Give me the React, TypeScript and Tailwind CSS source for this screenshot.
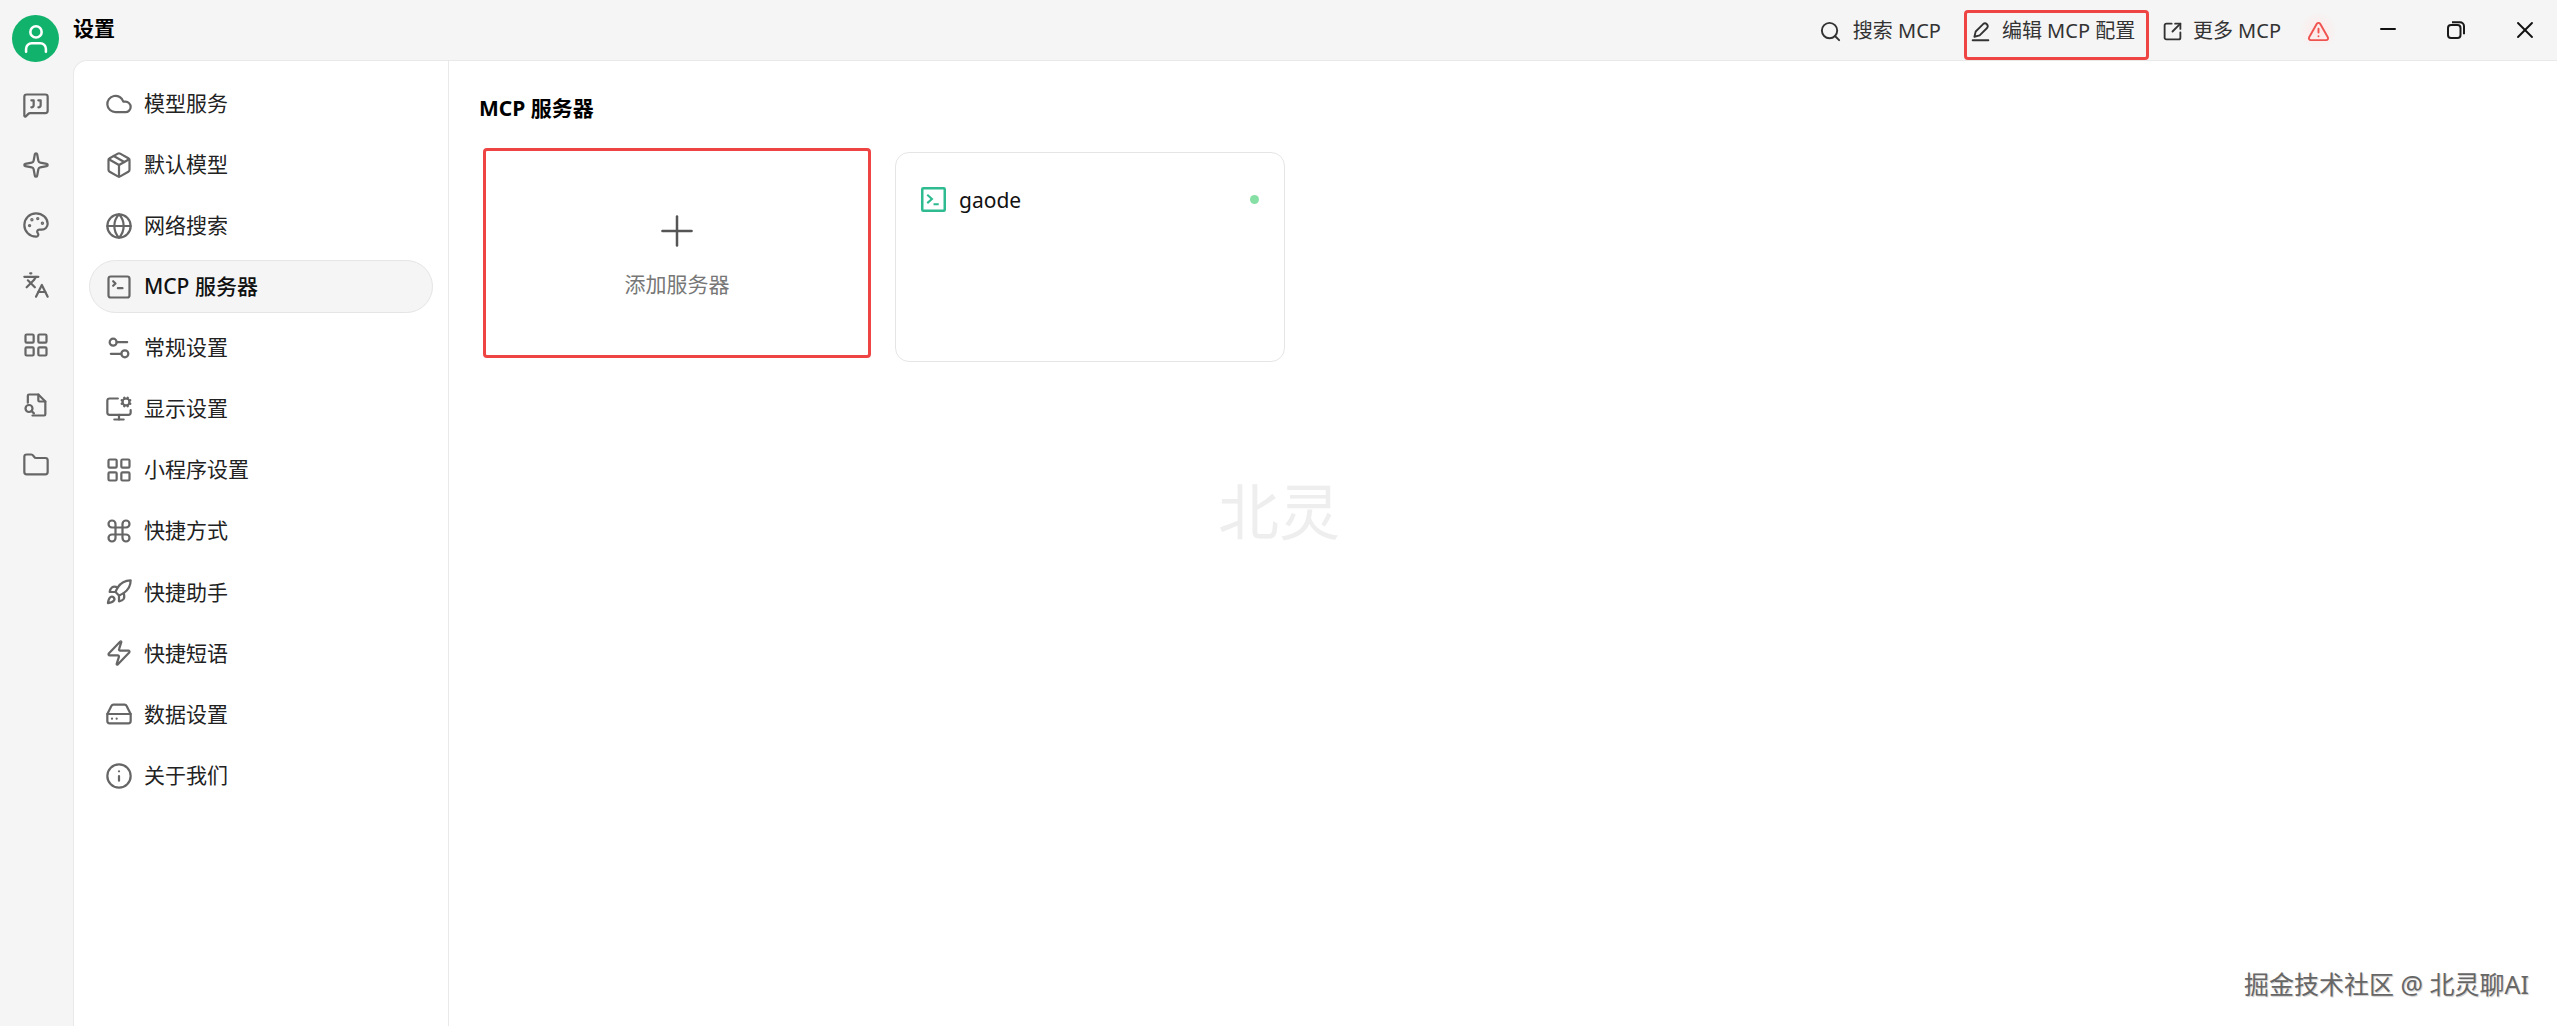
import {
  Cloud, Package, Globe, SquareTerminal, Settings2, MonitorCog, LayoutGrid, Command, Rocket, Zap, HardDrive, Info,
  MessageSquareQuote, Sparkle, Palette, Languages, Folder, Search, SquareArrowOutUpRight,
  TriangleAlert, Minus, X, Plus, User,
} from "lucide-react";

function FileFind({ size, strokeWidth, className }: { size?: number; strokeWidth?: number; className?: string }) {
  return (
    <svg width={size} height={size} viewBox="0 0 24 24" fill="none" stroke="currentColor" strokeWidth={strokeWidth} strokeLinecap="round" strokeLinejoin="round" className={className}>
      <path d="M5 10V4a1 1 0 0 1 1-1h8l6 6v11a1 1 0 0 1-1 1H9" />
      <path d="M14 3v5a1 1 0 0 0 1 1h5" />
      <circle cx="6" cy="15" r="3" />
      <path d="m8.2 17.2 2 2" />
    </svg>
  );
}

function RestoreIcon() {
  return (
    <svg width="18" height="18" viewBox="0 0 18 18" fill="none" stroke="#1a1a1a" strokeWidth="2" className="-mt-[3px]">
      <rect x="1" y="4" width="12.5" height="13" rx="3" />
      <path d="M5 1.2h8a4 4 0 0 1 4 4v8" />
    </svg>
  );
}

function EditIcon() {
  return (
    <svg width="21" height="21" viewBox="0 0 24 24" fill="none" stroke="currentColor" strokeWidth="2.1" strokeLinecap="round" strokeLinejoin="round">
      <path d="M3 22h18" />
      <path d="M15 3.5 6.5 12 5 18l6-1.5L19.5 8a3.2 3.2 0 0 0-4.5-4.5z" />
    </svg>
  );
}

const railIcons = [MessageSquareQuote, Sparkle, Palette, Languages, LayoutGrid, FileFind, Folder];

const menu = [
  { label: "模型服务", icon: Cloud },
  { label: "默认模型", icon: Package },
  { label: "网络搜索", icon: Globe },
  { label: "MCP 服务器", icon: SquareTerminal, active: true },
  { label: "常规设置", icon: Settings2 },
  { label: "显示设置", icon: MonitorCog },
  { label: "小程序设置", icon: LayoutGrid },
  { label: "快捷方式", icon: Command },
  { label: "快捷助手", icon: Rocket },
  { label: "快捷短语", icon: Zap },
  { label: "数据设置", icon: HardDrive },
  { label: "关于我们", icon: Info },
];

export default function App() {
  return (
    <div className="flex h-screen overflow-hidden bg-[#f5f5f5] text-[#222] font-['Noto_Sans','Noto_Sans_CJK_SC',sans-serif]">
      {/* left rail */}
      <div className="flex w-[73px] shrink-0 flex-col items-center pr-[2px] pt-[15px]">
        <div className="flex h-[47px] w-[47px] items-center justify-center rounded-full bg-[#10b26c]">
          <User size={34} strokeWidth={1.8} className="text-white" />
        </div>
        <div className="mt-[29px] flex flex-col gap-8">
          {railIcons.map((Icon, i) => (
            <Icon key={i} size={28} strokeWidth={1.9} className="text-[#666]" />
          ))}
        </div>
      </div>

      <div className="relative flex min-w-0 flex-1 flex-col">
        {/* top bar */}
        <div className="flex h-[60px] shrink-0 items-center justify-between">
          <span className="-mt-[2px] text-[21px] font-bold text-black">设置</span>
          <div className="flex h-full items-center pr-[18px] pt-[2px]">
            <div className="flex items-center gap-[11px] text-[20px] text-[#333]">
              <Search size={23} strokeWidth={2} />
              <span>搜索 MCP</span>
            </div>
            <div className="ml-[23px] flex h-[50px] w-[185px] items-center gap-[11px] self-end rounded-[4px] border-[3px] border-[#ef4444] pb-[8px] pl-[3px] text-[20px] text-[#333]">
              <EditIcon />
              <span>编辑 MCP 配置</span>
            </div>
            <div className="ml-[13px] flex items-center gap-[10px] text-[20px] text-[#333]">
              <SquareArrowOutUpRight size={21} strokeWidth={2.1} />
              <span>更多 MCP</span>
            </div>
            <div className="ml-[17px] flex h-[40px] w-[40px] items-center justify-center rounded-full bg-[radial-gradient(circle,#ffe8e8_0%,#f5f5f5_70%)] text-[#ef5350]">
              <TriangleAlert size={23} strokeWidth={2} />
            </div>
            <Minus size={24} strokeWidth={2} className="-mt-[4px] ml-[38px] text-[#111]" />
            <div className="ml-[47px] flex">
              <RestoreIcon />
            </div>
            <X size={28} strokeWidth={1.6} className="-mt-[3px] ml-[46px] text-[#111]" />
          </div>
        </div>

        {/* settings panel */}
        <div className="flex flex-1 rounded-tl-[14px] border-l border-t border-[#e9e9e9] bg-white">
          <div className="w-[375px] shrink-0 border-r border-[#e9e9e9] px-[15px] pt-[16px]">
            <div className="flex flex-col gap-[8.1px]">
              {menu.map(({ label, icon: Icon, active }) => (
                <div
                  key={label}
                  className={`flex h-[53px] items-center gap-[11px] rounded-full border pl-[15px] text-[21px] ${
                    active ? "border-[#e5e5e5] bg-[#f5f5f5] font-medium text-[#111]" : "border-transparent text-[#222]"
                  }`}
                >
                  <Icon size={28} strokeWidth={1.9} className="text-[#666]" />
                  <span>{label}</span>
                </div>
              ))}
            </div>
          </div>

          <div className="flex-1 pl-[30px] pt-[32px]">
            <h1 className="text-[21px] font-bold leading-[30px] text-black">MCP 服务器</h1>
            <div className="ml-[4px] mt-[25px] flex items-start gap-[24px]">
              <div className="flex h-[210px] w-[388px] flex-col items-center justify-center rounded-[4px] border-[3px] border-[#ef4444]">
                <Plus size={50} strokeWidth={1.2} className="text-[#555]" />
                <span className="mt-[13px] text-[21px] text-[#777]">添加服务器</span>
              </div>
              <div className="mt-1 h-[210px] w-[390px] rounded-[14px] border border-[#e5e5e5] px-[25px] pt-[30px]">
                <div className="flex items-center">
                  <svg width="25" height="25" viewBox="0 0 24 24" fill="none" stroke="#2dbb8f" strokeWidth="2.4">
                    <rect x="1.2" y="1.2" width="21.6" height="21.6" rx="1" />
                    <path d="m6 7.5 4.5 4-4.5 4M12 16.5h5" strokeWidth="2" />
                  </svg>
                  <span className="ml-[13px] pt-[2px] text-[21px] text-[#111]">gaode</span>
                  <span className="ml-auto h-[9px] w-[9px] rounded-full bg-[#86e0a5]" />
                </div>
              </div>
            </div>
          </div>
        </div>

        {/* watermarks */}
        <div className="absolute left-[1145px] top-[474px] text-[61px] leading-[76px] text-[#eeeeee]">北灵</div>
        <div className="absolute bottom-[26px] right-[28px] text-[25px] leading-[32px] text-[#666] [text-shadow:1px_1px_1px_#ccc]">
          掘金技术社区 @ 北灵聊AI
        </div>
      </div>
    </div>
  );
}
